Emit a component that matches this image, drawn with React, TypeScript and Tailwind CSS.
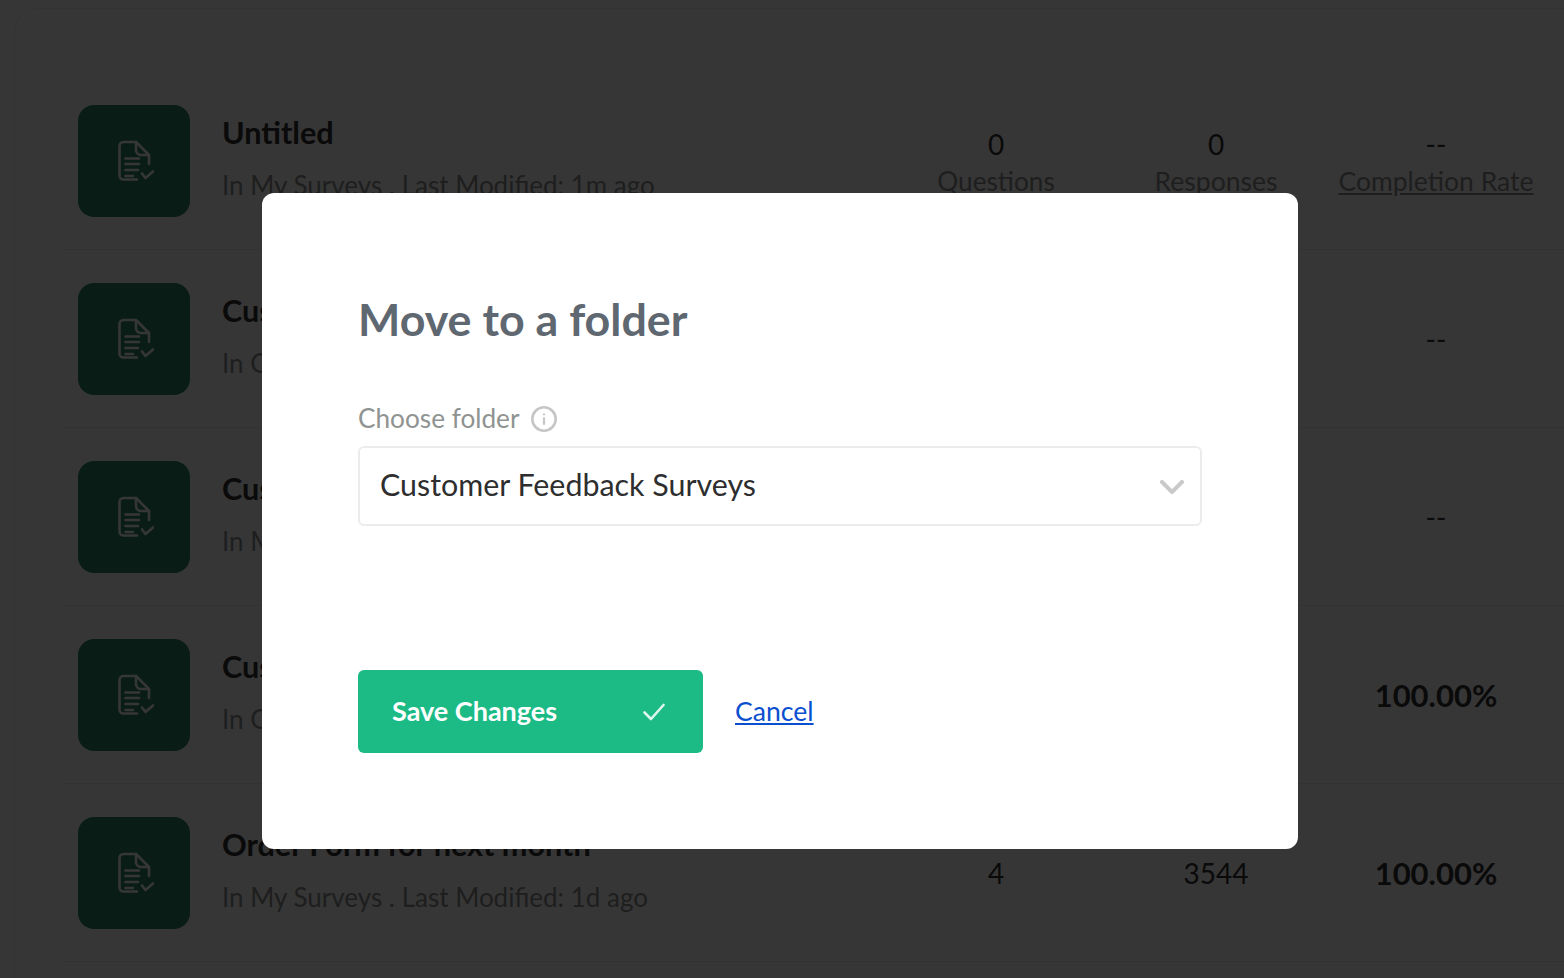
const fontStack = "font-['Lato','Noto_Sans',sans-serif]";

function SurveyIcon() {
    return (
        <svg width="36" height="42" viewBox="0 0 36 42" fill="none" stroke="#ffffff" strokeWidth="2.6" strokeLinecap="round" strokeLinejoin="round">
            <path d="M19 39.5H5.5A4 4 0 0 1 1.5 35.5V6A4 4 0 0 1 5.5 2H18L31 15V24" />
            <path d="M18 2V10A5 5 0 0 0 23 15H31" />
            <path d="M7.5 18.5H21M7.5 24H21M7.5 30H20M7.5 36H15" />
            <path d="M24 33.5L27.5 38L35 31.5" />
        </svg>
    );
}

type Row = {
    title: string;
    sub: string;
    questions: string;
    responses: string;
    rate: string;
    labels?: boolean;
};

const rows: Row[] = [
    { title: "Untitled", sub: "In My Surveys . Last Modified: 1m ago", questions: "0", responses: "0", rate: "--", labels: true },
    { title: "Customer Feedback", sub: "In General . Last Modified: 2m ago", questions: "", responses: "", rate: "--" },
    { title: "Customer Survey", sub: "In My Surveys . Last Modified: 5m ago", questions: "", responses: "", rate: "--" },
    { title: "Customer Feedback", sub: "In General . Last Modified: 1d ago", questions: "", responses: "", rate: "100.00%" },
    { title: "Order Form for next month", sub: "In My Surveys . Last Modified: 1d ago", questions: "4", responses: "3544", rate: "100.00%" },
];

function SurveyRow({ row }: { row: Row }) {
    const statBox = `flex w-[220px] flex-col items-center ${row.labels ? "pt-[5px]" : ""}`;
    return (
        <div className="flex h-[178px] shrink-0 items-center border-b border-[#ececec] pl-4 pr-[18px]">
            <div className="flex h-[112px] w-[112px] shrink-0 items-center justify-center rounded-[16px] bg-[#2a8565] pl-[4px]">
                <SurveyIcon />
            </div>
            <div className="ml-[32px] mb-[4px] flex min-w-0 flex-1 flex-col">
                <div className="text-[30.6px] leading-[38px] font-bold text-[#303030]">{row.title}</div>
                <div className="mt-[14px] text-[26px] leading-[38px] text-[#909090]">{row.sub}</div>
            </div>
            <div className={statBox}>
                <div className="text-[28px] leading-[36px] text-[#303030]">{row.questions}</div>
                {row.labels && <div className="text-[26.2px] leading-[38px] text-[#909090]">Questions</div>}
            </div>
            <div className={statBox}>
                <div className="text-[28px] leading-[36px] text-[#303030]">{row.responses}</div>
                {row.labels && <div className="text-[26.6px] leading-[38px] text-[#909090]">Responses</div>}
            </div>
            <div className={statBox}>
                <div className={`leading-[36px] text-[#303030] ${row.rate === "--" ? "text-[28px]" : "text-[31px] font-bold"}`}>{row.rate}</div>
                {row.labels && <div className="text-[26.5px] leading-[38px] text-[#909090] underline">Completion Rate</div>}
            </div>
        </div>
    );
}

export default function App() {
    return (
        <div className={`relative h-[978px] w-[1564px] overflow-hidden bg-white ${fontStack}`}>
            {/* survey list behind the dialog */}
            <div className="mt-2 ml-[14px] h-[970px] rounded-tl-[24px] border-t border-l border-[#f0f0f0] pt-[63px] pl-[47px]">
                <div className="flex flex-col">
                    {rows.map((row, i) => (
                        <SurveyRow key={i} row={row} />
                    ))}
                </div>
            </div>

            <div className="absolute inset-0 bg-black/[.79]">
                <div className="mt-[193px] ml-[262px] flex h-[656px] w-[1036px] flex-col rounded-[12px] bg-white px-[96px] pt-[95px]">
                    <h2 className="text-[44.8px] leading-[62px] font-bold text-[#5f6771]">Move to a folder</h2>
                    <div className="mt-[49px] flex h-[40px] items-center gap-[12px]">
                        <span className="text-[26.2px] text-[#8f9391]">Choose folder</span>
                        <svg width="26" height="26" viewBox="0 0 26 26" fill="none" stroke="#c6c6c6" strokeWidth="2.6" strokeLinecap="round">
                            <circle cx="13" cy="13" r="11.7" />
                            <path d="M13 12V18" strokeWidth="2.2" />
                            <path d="M13 8.4V8.5" strokeWidth="2.2" />
                        </svg>
                    </div>
                    <div className="mt-[7px] flex h-[80px] w-[844px] items-center justify-between rounded-[6px] border-2 border-[#ececec] pr-[16px] pl-[20px]">
                        <span className="pb-[3px] text-[30.4px] text-[#2e2e2e]">Customer Feedback Surveys</span>
                        <svg className="mt-[2px]" width="24" height="14" viewBox="0 0 24 14" fill="none" stroke="#c9c9c9" strokeWidth="4" strokeLinecap="round" strokeLinejoin="round">
                            <path d="M2 2L12 12L22 2" />
                        </svg>
                    </div>
                    <div className="mt-[144px] flex items-center gap-[32px]">
                        <button className="flex h-[83px] w-[345px] items-center justify-between rounded-[6px] bg-[#1cbb86] pr-[38px] pl-[34px]">
                            <span className="text-[27px] font-bold text-white">Save Changes</span>
                            <svg width="22" height="18" viewBox="0 0 22 18" fill="none" stroke="#ffffff" strokeOpacity=".85" strokeWidth="2.6" strokeLinecap="round" strokeLinejoin="round">
                                <path d="M1.5 9.5L8 16L20.5 2" />
                            </svg>
                        </button>
                        <a className="text-[26.6px] text-[#0b4fd1] underline">Cancel</a>
                    </div>
                </div>
            </div>
        </div>
    );
}
